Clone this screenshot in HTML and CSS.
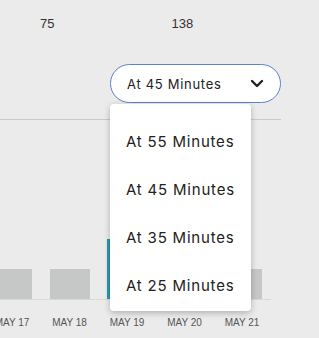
FILE: index.html
```html
<!DOCTYPE html>
<html>
    <head>
        <meta charset="utf-8">
        <title>Trend</title>
        <link rel="stylesheet" href="styles.css">
    </head>
    <body>
        <div class="page">
            <div class="stats">
                <span class="stat statA">75</span>
                <span class="stat statB">138</span>
            </div>

            <div class="filterRow">
                <div class="select">
                    <span class="selectText">At 45 Minutes</span>
                    <svg class="chevron" width="14" height="10" viewBox="0 0 14 10">
                        <path d="M2 2 L7 7 L12 2" fill="none" stroke="#222" stroke-width="2.4" stroke-linecap="round" stroke-linejoin="round"/>
                    </svg>
                </div>
            </div>

            <div class="divider"></div>

            <div class="chart">
                <div class="bars">
                    <div class="bar"></div>
                    <div class="bar"></div>
                    <div class="bar active"></div>
                    <div class="bar"></div>
                    <div class="bar"></div>
                </div>
                <div class="axis"></div>
                <div class="labels">
                    <span>MAY 17</span>
                    <span>MAY 18</span>
                    <span>MAY 19</span>
                    <span>MAY 20</span>
                    <span>MAY 21</span>
                </div>
            </div>

            <ul class="menu">
                <li>At 55 Minutes</li>
                <li>At 45 Minutes</li>
                <li>At 35 Minutes</li>
                <li>At 25 Minutes</li>
            </ul>
        </div>
    </body>
</html>
```

FILE: styles.css
```css
html, body{
    margin: 0;
    padding: 0;
}

body{
    background-color: #ebebeb;
    font-family: 'Liberation Sans', Arial, sans-serif;
    color: #333;
}

.page{
    position: relative;
    width: 319px;
    height: 338px;
    overflow: hidden;
}

.stats{
    display: flex;
    padding-top: 16px;
    height: 18px;
    font-size: 13px;
    line-height: 16px;
}
.statA{
    margin-left: 40px;
}
.statB{
    margin-left: 117px;
}

.filterRow{
    padding-top: 30px;
    padding-left: 110px;
}

.select{
    box-sizing: border-box;
    width: 171px;
    height: 39px;
    border: 1px solid #5b82cc;
    border-radius: 20px;
    background-color: #fff;
    display: flex;
    align-items: center;
    justify-content: space-between;
    padding: 0 16px 0 16px;
    font-family: 'Inter', 'Noto Sans', sans-serif;
    font-size: 13px;
    letter-spacing: 0.7px;
    color: #222;
}
.chevron{
    margin-top: 1px;
}

.divider{
    margin-top: 16px;
    width: 281px;
    height: 1px;
    background-color: #c9c9c9;
}

.chart{
    padding-top: 119px;
}

.bars{
    display: flex;
    align-items: flex-end;
    gap: 17.5px;
    margin-left: -8px;
    height: 60px;
}
.bar{
    width: 40px;
    height: 30px;
    background-color: #c6c8c7;
    flex-shrink: 0;
}
.bar.active{
    height: 60px;
    background-color: #2a9aa8;
}

.axis{
    width: 271px;
    height: 1px;
    background-color: #d8d8d8;
}

.labels{
    display: flex;
    gap: 17.5px;
    margin-left: -8px;
    padding-top: 17px;
    font-size: 10px;
    color: #555;
}
.labels span{
    width: 40px;
    flex-shrink: 0;
    text-align: center;
}

.menu{
    position: absolute;
    top: 104px;
    left: 110px;
    width: 141px;
    height: 207px;
    box-sizing: border-box;
    margin: 0;
    padding: 14px 0 0 0;
    list-style: none;
    background-color: #fff;
    border-radius: 4px;
    box-shadow: 0 2px 6px rgba(0, 0, 0, 0.25);
    font-family: 'Inter', 'Noto Sans', sans-serif;
    font-size: 15px;
    letter-spacing: 0.8px;
    color: #222;
}
.menu li{
    height: 48px;
    line-height: 48px;
    padding-left: 16px;
}
```
